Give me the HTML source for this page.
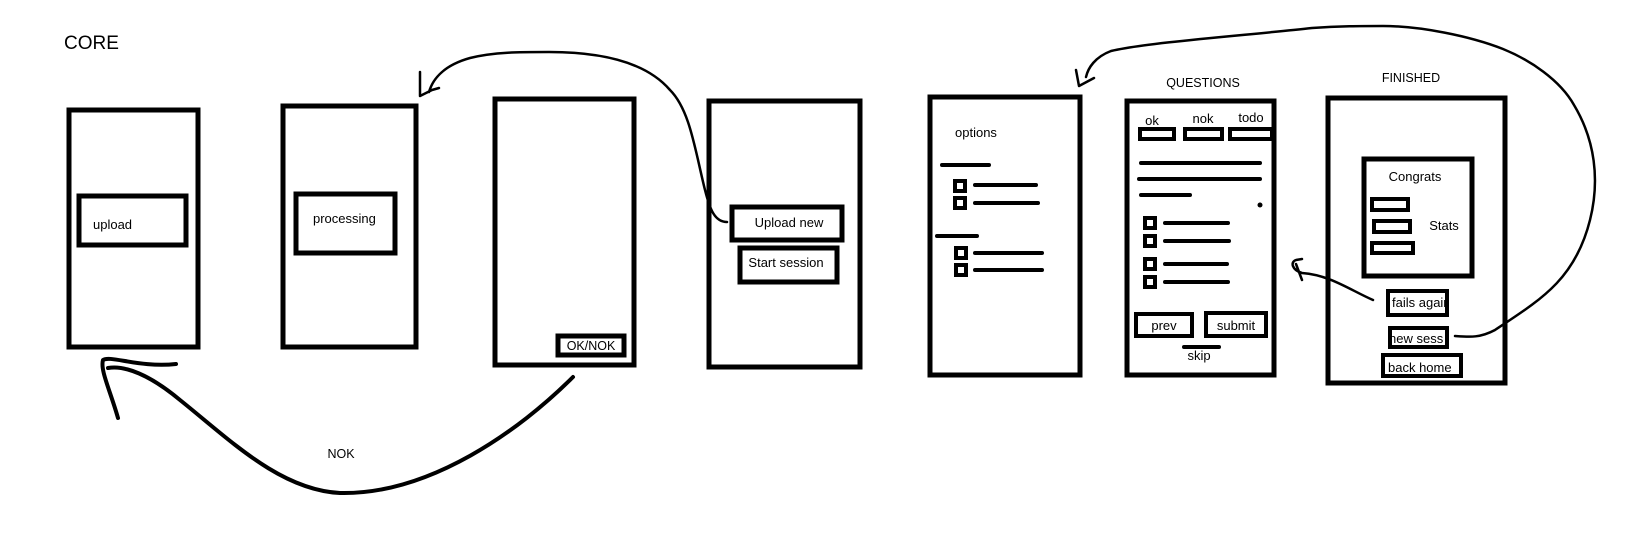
<!DOCTYPE html>
<html><head><meta charset="utf-8"><style>
html,body{margin:0;padding:0;background:#fff;}
svg{display:block}
text{font-family:"Liberation Sans",sans-serif;fill:#000;}
</style></head><body>
<svg width="1645" height="546" viewBox="0 0 1645 546" xmlns="http://www.w3.org/2000/svg">
<g fill="none" stroke="#000" stroke-width="5">
<rect x="69" y="110" width="129" height="237"/>
<rect x="79" y="196" width="107" height="49"/>
<rect x="283" y="106" width="133" height="241"/>
<rect x="296" y="194" width="99" height="59"/>
<rect x="495" y="99" width="139" height="266"/>
<rect x="558" y="336" width="66" height="19"/>
<rect x="709" y="101" width="151" height="266"/>
<rect x="732" y="207" width="110" height="33"/>
<rect x="740" y="248" width="97" height="34"/>
<rect x="930" y="97" width="150" height="278"/>
<rect x="1127" y="101" width="147" height="274"/>
<rect x="1328" y="98" width="177" height="285"/>
<rect x="1364" y="159" width="108" height="117"/>
</g>
<g fill="none" stroke="#000" stroke-width="4">
<rect x="1140" y="129" width="34" height="10"/>
<rect x="1185" y="129" width="37" height="10"/>
<rect x="1230" y="129" width="42" height="10"/>
<rect x="1372" y="199" width="36" height="11"/>
<rect x="1374" y="221" width="36" height="11"/>
<rect x="1372" y="243" width="41" height="10"/>
<rect x="1388" y="291" width="59" height="24"/>
<rect x="1390" y="328" width="57" height="19"/>
<rect x="1383" y="355" width="78" height="21"/>
<rect x="1136" y="314" width="56" height="22"/>
<rect x="1206" y="313" width="60" height="23"/>
</g>
<g stroke="#000" stroke-width="4" stroke-linecap="round">
<line x1="942" y1="165" x2="989" y2="165"/>
<line x1="975" y1="185" x2="1036" y2="185"/>
<line x1="975" y1="203" x2="1038" y2="203"/>
<line x1="937" y1="236" x2="977" y2="236"/>
<line x1="975" y1="253" x2="1042" y2="253"/>
<line x1="975" y1="270" x2="1042" y2="270"/>
<line x1="1141" y1="163" x2="1260" y2="163"/>
<line x1="1139" y1="179" x2="1260" y2="179"/>
<line x1="1141" y1="195" x2="1190" y2="195"/>
<line x1="1165" y1="223" x2="1228" y2="223"/>
<line x1="1165" y1="241" x2="1229" y2="241"/>
<line x1="1165" y1="264" x2="1227" y2="264"/>
<line x1="1165" y1="282" x2="1228" y2="282"/>
<line x1="1184" y1="347" x2="1219" y2="347"/>
</g>
<circle cx="1260" cy="205" r="2.5" fill="#000"/>
<g fill="none" stroke="#000" stroke-width="4">
<rect x="955" y="181" width="10" height="10"/><rect x="955" y="198" width="10" height="10"/>
<rect x="956" y="248" width="10" height="10"/><rect x="956" y="265" width="10" height="10"/>
<rect x="1145" y="218" width="10" height="10"/><rect x="1145" y="236" width="10" height="10"/>
<rect x="1145" y="259" width="10" height="10"/><rect x="1145" y="277" width="10" height="10"/>
</g>
<g fill="none" stroke="#000" stroke-linecap="round" stroke-linejoin="round">
<path stroke-width="2.5" d="M727 222 C715 222 710 210 705 190 C695 150 690 110 670 90 C640 55 580 52 549 52 C520 52 494 52 470 58 C445 65 433 78 429 92 M420 72 L420 96 L432 90 L439 88"/>
<path stroke-width="4" d="M573 377 C520 430 430 495 340 493 C280 490 230 440 180 400 C150 375 125 365 108 368 M118 418 C110 390 100 370 103 360 C110 355 140 368 176 364"/>
<path stroke-width="2.5" d="M1373 300 C1350 290 1330 275 1302 273 C1292 270 1290 262 1296 260 L1302 259 M1296 264 L1302 280"/>
<path stroke-width="2.5" d="M1455 336 C1470 337 1480 338 1495 330 C1540 300 1575 280 1590 220 C1600 180 1595 140 1574 105 C1560 80 1530 60 1503 49 C1470 36 1420 26 1383 26 C1360 26 1340 26 1312 28 C1250 35 1150 42 1111 51 C1095 57 1088 68 1086 77 M1076 70 L1079 86 L1094 78"/>
</g>
<text x="64" y="49" font-size="19">CORE</text>
<text x="93" y="229" font-size="13">upload</text>
<text x="313" y="223" font-size="13">processing</text>
<text x="591" y="350" font-size="12.5" text-anchor="middle">OK/NOK</text>
<text x="789" y="227" font-size="13" text-anchor="middle">Upload new</text>
<text x="786" y="267" font-size="13" text-anchor="middle">Start session</text>
<text x="341" y="458" font-size="12.5" text-anchor="middle">NOK</text>
<text x="955" y="137" font-size="13">options</text>
<text x="1203" y="87" font-size="12.5" text-anchor="middle">QUESTIONS</text>
<text x="1152" y="125" font-size="13" text-anchor="middle">ok</text>
<text x="1203" y="123" font-size="13" text-anchor="middle">nok</text>
<text x="1251" y="122" font-size="13" text-anchor="middle">todo</text>
<text x="1164" y="330" font-size="13" text-anchor="middle">prev</text>
<text x="1236" y="330" font-size="13" text-anchor="middle">submit</text>
<text x="1199" y="360" font-size="13" text-anchor="middle">skip</text>
<text x="1411" y="82" font-size="12.5" text-anchor="middle">FINISHED</text>
<text x="1415" y="181" font-size="13" text-anchor="middle">Congrats</text>
<text x="1444" y="230" font-size="13" text-anchor="middle">Stats</text>
<svg x="1390" y="293" width="55" height="20"><text x="2" y="14" font-size="13">fails again</text></svg>
<svg x="1392" y="330" width="53" height="16"><text x="-3" y="13" font-size="13">new sess</text></svg>
<svg x="1385" y="357" width="74" height="18"><text x="3" y="15" font-size="13">back home</text></svg>
</svg>
</body></html>
